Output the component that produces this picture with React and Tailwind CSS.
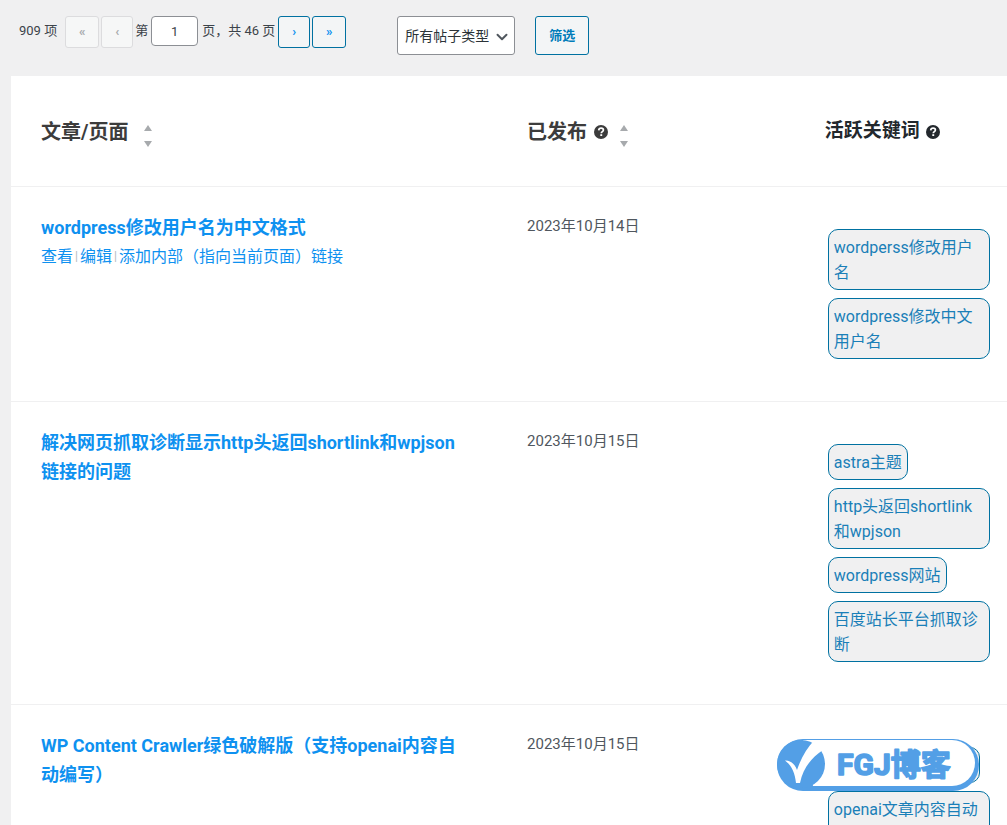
import { ChevronDown } from "lucide-react";

const posts = [
  {
    title: "wordpress修改用户名为中文格式",
    date: "2023年10月14日",
    keywords: ["wordperss修改用户名", "wordpress修改中文用户名"],
    showActions: true,
  },
  {
    title: "解决网页抓取诊断显示http头返回shortlink和wpjson链接的问题",
    date: "2023年10月15日",
    keywords: [
      "astra主题",
      "http头返回shortlink和wpjson",
      "wordpress网站",
      "百度站长平台抓取诊断",
    ],
  },
  {
    title: "WP Content Crawler绿色破解版（支持openai内容自动编写）",
    date: "2023年10月15日",
    keywords: ["", "openai文章内容自动编写"],
  },
];

function HelpIcon() {
  return (
    <svg viewBox="0 0 14 14" className="size-[14px] shrink-0" aria-hidden="true">
      <circle cx="7" cy="7" r="7" fill="currentColor" />
      <path
        d="M4.7 5.4C4.8 4 5.7 3.2 7.1 3.2c1.4 0 2.3.8 2.3 1.9 0 1.5-2.1 1.6-2.1 3.1"
        fill="none"
        stroke="#fff"
        strokeWidth="1.7"
      />
      <rect x="6.3" y="9.2" width="1.9" height="1.8" fill="#fff" />
    </svg>
  );
}

function SortArrows() {
  return (
    <svg viewBox="0 0 8 22" className="mt-2 h-[22px] w-2 shrink-0 fill-[#a7aaad]" aria-hidden="true">
      <path d="M4 0 8 6H0Z" />
      <path d="M0 16h8l-4 6Z" />
    </svg>
  );
}

function PageButton({ label, children, className = "", disabled = false }) {
  return (
    <button
      type="button"
      aria-label={label}
      disabled={disabled}
      className={`h-8 rounded-[3px] border text-[13px] font-bold ${
        disabled
          ? "border-[#dcdcde] bg-[#f6f7f7] text-[#a7aaad]"
          : "border-[#0071a1] bg-[#f3f5f6] text-[#0e91f0]"
      } ${className}`}
    >
      {children}
    </button>
  );
}

function Toolbar() {
  return (
    <div className="flex h-[76px] items-start pt-4 pl-[19px] text-[13px] text-[#3c434a]">
      <div className="flex items-start whitespace-nowrap">
        <span className="mr-2 leading-[30px]">909 项</span>
        <PageButton label="首页" disabled className="mr-0.5 w-[34px]">«</PageButton>
        <PageButton label="上一页" disabled className="mr-0.5 w-8">‹</PageButton>
        <label htmlFor="current-page" className="mr-[3px] leading-[30px]">第</label>
        <input
          id="current-page"
          type="text"
          defaultValue="1"
          className="mr-1 h-[30px] w-[47px] rounded-[4px] border border-[#8c8f94] bg-white text-center"
        />
        <span className="mr-[3px] leading-[30px]">页，共 46 页</span>
        <PageButton label="下一页" className="mr-0.5 w-8">›</PageButton>
        <PageButton label="尾页" className="w-[34px]">»</PageButton>
      </div>

      <div className="ml-[51px] flex gap-5">
        <div className="relative">
          <select
            aria-label="所有帖子类型"
            className="h-[39px] w-[118px] appearance-none rounded-[3px] border border-[#8c8f94] bg-white pl-[7px] text-sm text-[#2c3338]"
          >
            <option>所有帖子类型</option>
          </select>
          <ChevronDown
            size={18}
            strokeWidth={2.6}
            className="pointer-events-none absolute top-3 right-1 text-[#50575e]"
          />
        </div>
        <button
          type="button"
          className="h-[39px] w-[54px] rounded-[3px] border border-[#0071a1] bg-[#f3f5f6] font-bold text-[#007cba]"
        >
          筛选
        </button>
      </div>
    </div>
  );
}

function PostRow({ post }) {
  return (
    <tr className="border-t border-[#f0f0f1] align-top">
      <td className="px-[30px] pt-[26px] pb-[42px]">
        <a href="#" className="block text-lg leading-[29px] font-bold text-[#0e91f0]">
          {post.title}
        </a>
        {post.showActions && (
          <div className="flex gap-[2px] text-base leading-[29px] text-[#0e91f0]">
            <a href="#">查看</a>
            <span className="text-xs leading-[29px] text-[#b4b9be]">|</span>
            <a href="#">编辑</a>
            <span className="text-xs leading-[29px] text-[#b4b9be]">|</span>
            <a href="#">添加内部（指向当前页面）链接</a>
          </div>
        )}
      </td>
      <td className="px-[30px] pt-[25px] text-[15px] leading-[29px] text-[#50575e]">{post.date}</td>
      <td className="pt-[42px] pr-[17px] pb-[42px] pl-[33px]">
        <ul className="flex flex-col items-start gap-2">
          {post.keywords.map((keyword) => (
            <li
              key={keyword}
              className="rounded-[10px] border border-[#0071a1] bg-[#f0f0f1] px-[5px] pt-[5px] pb-1 text-base leading-[25px] text-[#1a7fb8] empty:h-9 empty:w-[152px]"
            >
              {keyword}
            </li>
          ))}
        </ul>
      </td>
    </tr>
  );
}

function PostTable() {
  return (
    <table className="w-full table-fixed border-collapse bg-white">
      <thead>
        <tr className="h-[110px] text-left text-xl text-[#3c3c3c]">
          <th className="w-[48.8%] px-[30px] pt-0.5">
            <div className="flex h-[30px] items-center gap-4">
              文章/页面
              <SortArrows />
            </div>
          </th>
          <th className="w-[29.9%] px-[30px] pt-0.5">
            <div className="flex h-[30px] items-center">
              已发布
              <span className="mr-3 ml-[7px]">
                <HelpIcon />
              </span>
              <SortArrows />
            </div>
          </th>
          <th className="pt-0.5 pl-[30px] text-[19px] text-[#23282d]">
            <div className="flex h-[30px] items-center gap-1.5">
              活跃关键词
              <HelpIcon />
            </div>
          </th>
        </tr>
      </thead>
      <tbody>
        {posts.map((post) => (
          <PostRow key={post.title} post={post} />
        ))}
      </tbody>
    </table>
  );
}

function BlogBadge() {
  return (
    <svg
      viewBox="0 0 204 52"
      className="absolute right-[26px] bottom-[34px] h-[52px] w-[204px]"
      role="img"
      aria-label="FGJ博客"
    >
      <rect width="202" height="52" rx="26" fill="#539fe6" />
      <path d="M26 1H175a23 23 0 0 1 0 46H36Z" fill="#fff" />
      <path d="M26 .5H175" stroke="#539fe6" />
      <circle cx="24" cy="25" r="24" fill="#539fe6" />
      <path
        d="M8 21.5C13 21 18 25 20 31C24 19 30 9 37 1.500L48 1.500L46 11C35 18 26 29 23 44h-4C18 33 14 26 8 21.5Z"
        fill="#fff"
      />
      <text
        x="60"
        y="36"
        fontSize="30"
        fontWeight="700"
        fill="#539fe6"
        stroke="#539fe6"
        strokeWidth="1.6"
        strokeLinejoin="round"
      >
        FGJ博客
      </text>
    </svg>
  );
}

export default function App() {
  return (
    <div className="relative h-screen overflow-hidden bg-[#f0f0f1] font-['Roboto','Noto_Sans_CJK_SC',sans-serif]">
      <Toolbar />
      <main className="pl-[11px]">
        <PostTable />
      </main>
      <BlogBadge />
    </div>
  );
}
